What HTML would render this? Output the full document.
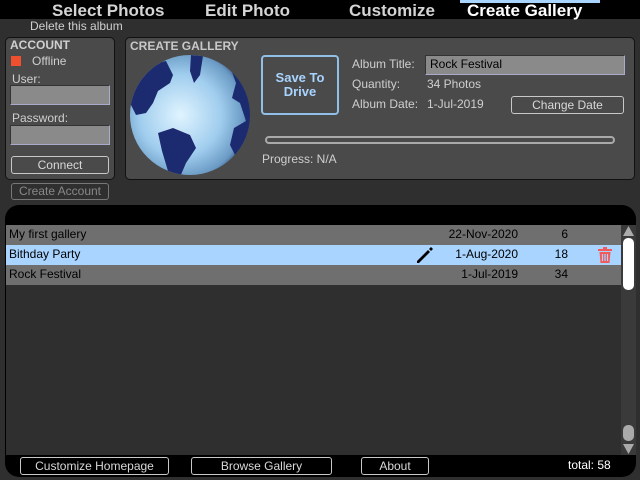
<!DOCTYPE html>
<html><head><meta charset="utf-8"><style>
*{margin:0;padding:0;box-sizing:border-box}
body{width:640px;height:480px;background:#2f2f2f;font-family:"Liberation Sans",sans-serif;position:relative;overflow:hidden;color:#d0d0d0}
.a{position:absolute}
.tab{position:absolute;top:1px;font-weight:bold;font-size:17px;color:#d4d4d4}
.btn{position:absolute;border:1px solid #c8c8c8;border-radius:3px;font-size:12px;color:#d8d8d8;text-align:center}
.lbl{position:absolute;font-size:12px;color:#cfcfcf}
.row{position:absolute;left:6px;width:615px;height:20px;font-size:12px;color:#000;line-height:18px}
.row span{position:absolute}
</style></head><body>
<div class="a" style="left:0;top:0;width:640px;height:19px;background:#000"></div>
<div class="a" style="left:460px;top:0;width:140px;height:3px;background:#a8d4ff"></div>
<div class="tab" style="left:52px">Select Photos</div>
<div class="tab" style="left:205px">Edit Photo</div>
<div class="tab" style="left:349px">Customize</div>
<div class="tab" style="left:467px;color:#fff">Create Gallery</div>
<div class="lbl" style="left:30px;top:19px">Delete this album</div>

<div class="a" style="left:5px;top:37px;width:110px;height:143px;background:#4a4a4a;border:1px solid #111;border-radius:5px"></div>
<div class="a" style="left:10px;top:38px;font-size:12px;font-weight:bold;color:#d0d0d0">ACCOUNT</div>
<div class="a" style="left:11px;top:56px;width:10px;height:10px;background:#f05030"></div>
<div class="lbl" style="left:32px;top:54px">Offline</div>
<div class="lbl" style="left:12px;top:72px">User:</div>
<div class="a" style="left:10px;top:85px;width:100px;height:20px;background:#8a8a8a;border:1px solid #aac;border-top-color:#333;border-left-color:#333"></div>
<div class="lbl" style="left:12px;top:111px">Password:</div>
<div class="a" style="left:10px;top:125px;width:100px;height:20px;background:#8a8a8a;border:1px solid #aac;border-top-color:#333;border-left-color:#333"></div>
<div class="btn" style="left:11px;top:156px;width:98px;height:18px;line-height:16px">Connect</div>
<div class="btn" style="left:11px;top:183px;width:98px;height:17px;line-height:15px;color:#888;border-color:#777">Create Account</div>

<div class="a" style="left:125px;top:37px;width:510px;height:143px;background:#4a4a4a;border:1px solid #111;border-radius:5px"></div>
<div class="a" style="left:130px;top:39px;font-size:12px;font-weight:bold;color:#c8c8c8">CREATE GALLERY</div>
<svg class="a" style="left:128px;top:53px" width="124" height="124" viewBox="0 0 124 124">
<defs><radialGradient id="g" cx="0.42" cy="0.5" r="0.62"><stop offset="0" stop-color="#e0f4ff"/><stop offset="0.55" stop-color="#a0cdee"/><stop offset="0.85" stop-color="#6a9ac4"/><stop offset="1" stop-color="#1a3060"/></radialGradient>
<clipPath id="c"><circle cx="62" cy="62" r="60"/></clipPath></defs>
<circle cx="62" cy="62" r="60" fill="url(#g)"/>
<g clip-path="url(#c)" fill="#1c2a70">
<path d="M5 30 L20 12 L38 8 L45 22 L42 30 L30 38 L25 50 L18 60 L8 62 L2 50 Z"/>
<path d="M63 2 L75 3 L72 22 L66 30 L62 18 Z"/>
<path d="M100 8 L125 15 L125 110 L112 112 L102 92 L106 75 L118 68 L112 50 L104 45 L108 30 Z"/>
<path d="M30 80 L45 75 L62 82 L68 95 L58 110 L52 124 L40 118 L34 98 Z"/>
</g></svg>
<div class="a" style="left:261px;top:55px;width:78px;height:60px;border:2px solid #90c0e8;border-radius:4px;color:#a8d4ff;font-weight:bold;font-size:13px;text-align:center;padding-top:14px;line-height:14px">Save To<br>Drive</div>
<div class="lbl" style="left:352px;top:57px">Album Title:</div>
<div class="a" style="left:425px;top:55px;width:200px;height:20px;background:#8a8a8a;border:1px solid #aac;border-top-color:#333;border-left-color:#333;font-size:12px;color:#000;padding-left:4px;line-height:17px">Rock Festival</div>
<div class="lbl" style="left:352px;top:77px">Quantity:</div>
<div class="lbl" style="left:427px;top:77px">34 Photos</div>
<div class="lbl" style="left:352px;top:97px">Album Date:</div>
<div class="lbl" style="left:427px;top:97px">1-Jul-2019</div>
<div class="btn" style="left:511px;top:96px;width:113px;height:18px;line-height:16px">Change Date</div>
<div class="a" style="left:265px;top:136px;width:350px;height:8px;border:2px solid #aaa;border-radius:4px"></div>
<div class="lbl" style="left:262px;top:152px">Progress: N/A</div>

<div class="a" style="left:5px;top:205px;width:631px;height:272px;background:#000;border-radius:14px"></div>
<div class="a" style="left:6px;top:225px;width:615px;height:230px;background:#2f2f2f"></div>
<div class="row" style="top:225px;background:#6f6f6f"><span style="left:3px">My first gallery</span><span style="right:103px">22-Nov-2020</span><span style="right:53px">6</span></div>
<div class="row" style="top:245px;background:#a8d4ff"><span style="left:3px">Bithday Party</span><span style="right:103px">1-Aug-2020</span><span style="right:53px">18</span>
<svg class="a" style="left:410px;top:1px" width="20" height="18" viewBox="0 0 20 18"><path d="M3 17 L1 17 L1 15 L12 4 L14 6 Z M13 3 L15 1 L17 3 L15 5 Z" fill="#000"/></svg>
<svg class="a" style="left:591px;top:1px" width="16" height="18" viewBox="0 0 16 18"><path d="M1 3 H15 V5 H1 Z M6 1 H10 V3 H6 Z" fill="#f05a5a"/><path d="M2.5 6 H13.5 L12.5 17 H3.5 Z" fill="#f05a5a"/><path d="M5.5 8 V15 M8 8 V15 M10.5 8 V15" stroke="#a8d4ff" stroke-width="1.2"/></svg></div>
<div class="row" style="top:265px;background:#6f6f6f"><span style="left:3px">Rock Festival</span><span style="right:103px">1-Jul-2019</span><span style="right:53px">34</span></div>

<div class="a" style="left:621px;top:225px;width:15px;height:230px;background:#3a3a3a"></div>
<svg class="a" style="left:622px;top:225px" width="13" height="12"><path d="M1 11 L6.5 1 L12 11 Z" fill="#aaa"/></svg>
<div class="a" style="left:623px;top:238px;width:11px;height:52px;background:#fff;border-radius:5px"></div>
<div class="a" style="left:623px;top:425px;width:11px;height:16px;background:#aaa;border-radius:5px"></div>
<svg class="a" style="left:622px;top:443px" width="13" height="12"><path d="M1 1 L12 1 L6.5 11 Z" fill="#aaa"/></svg>

<div class="btn" style="left:20px;top:457px;width:149px;height:18px;line-height:16px">Customize Homepage</div>
<div class="btn" style="left:191px;top:457px;width:141px;height:18px;line-height:16px">Browse Gallery</div>
<div class="btn" style="left:361px;top:457px;width:68px;height:18px;line-height:16px">About</div>
<div class="a" style="left:568px;top:458px;font-size:12px;color:#fff">total: 58</div>
</body></html>
